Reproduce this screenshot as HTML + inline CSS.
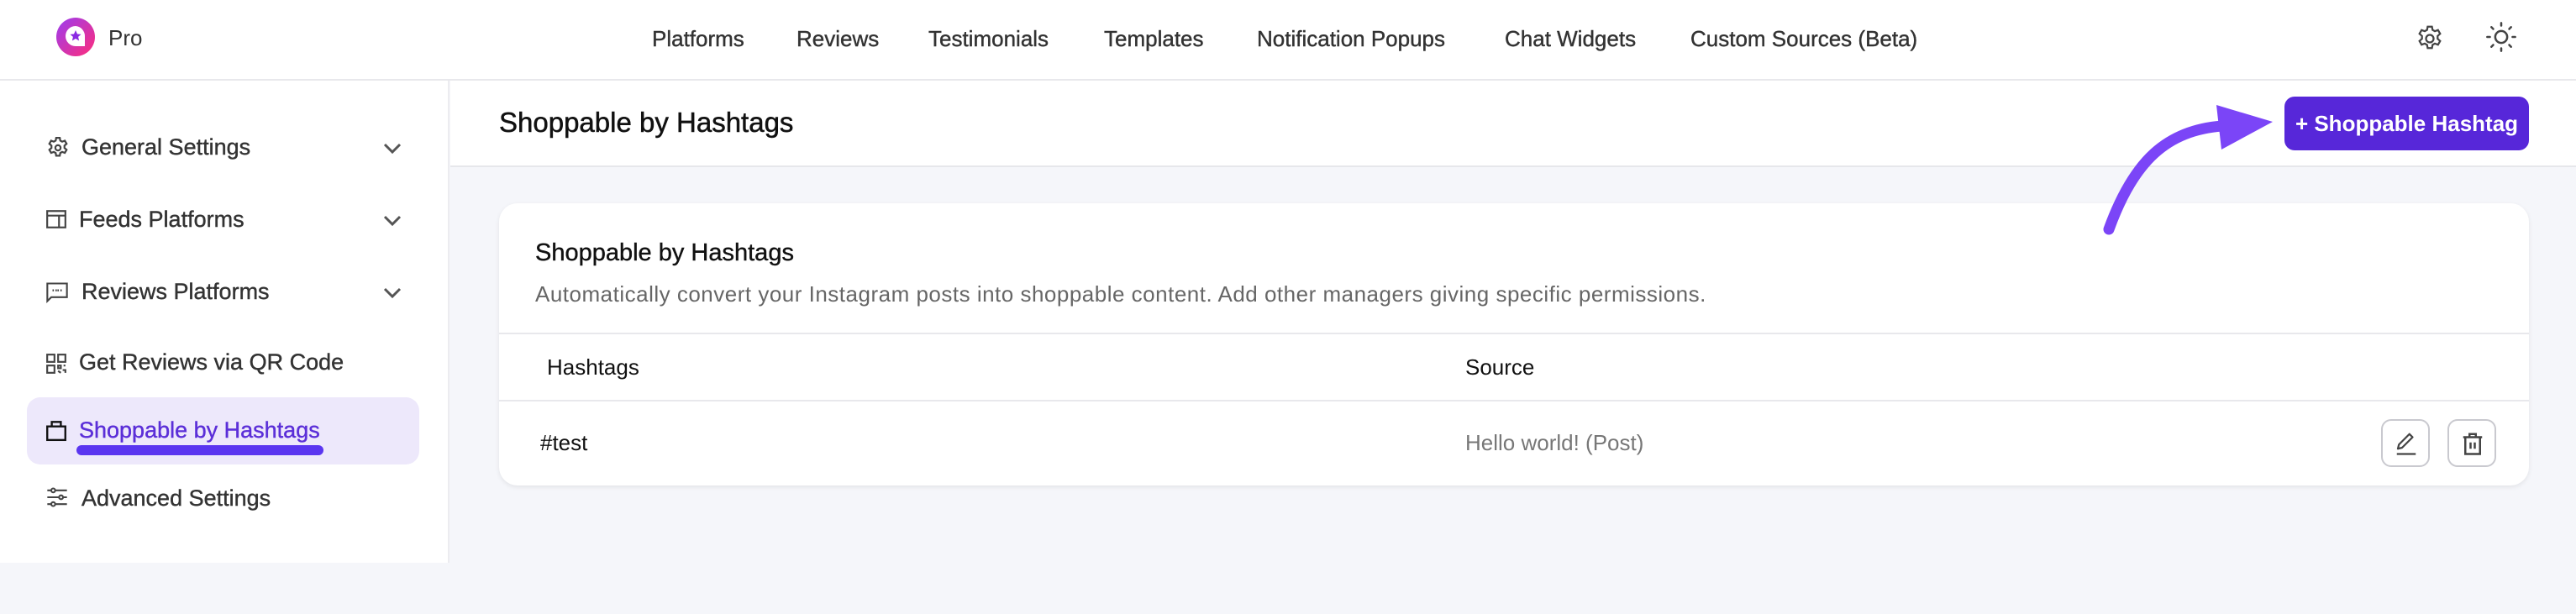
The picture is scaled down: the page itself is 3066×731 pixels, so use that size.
<!DOCTYPE html>
<html><head><meta charset="utf-8"><style>
*{margin:0;padding:0;box-sizing:border-box}
body{width:3066px;height:731px;overflow:hidden;background:#f5f6fa;font-family:"Liberation Sans",sans-serif;position:relative;color:#111}
.abs{position:absolute;white-space:nowrap}
.hdr{position:absolute;left:0;top:0;width:3066px;height:96px;background:#fff;border-bottom:2px solid #e8e8ec}
.nav{font-size:26px;color:#333;top:31px;-webkit-text-stroke:0.4px #333}
.side{position:absolute;left:0;top:96px;width:535px;height:574px;background:#fff;border-right:2px solid #ececf0}
.si{font-size:27px;color:#333;-webkit-text-stroke:0.4px #333}
.tb{position:absolute;left:536px;top:96px;width:2530px;height:103px;background:#fff;border-bottom:2px solid #e6e7eb}
.card{position:absolute;left:594px;top:242px;width:2416px;height:336px;background:#fff;border-radius:22px;box-shadow:0 2px 6px rgba(0,0,0,.08)}
.ib{position:absolute;width:58px;height:57px;border:2px solid #c9c9cf;border-radius:12px;top:499px;background:#fff}
</style></head><body>
<div class="hdr"></div>
<svg class="abs" style="left:66px;top:20px" width="48" height="48" viewBox="0 0 48 48"><defs><linearGradient id="g" x1="0" y1="0" x2="1" y2="1"><stop offset="0" stop-color="#9b3df0"/><stop offset="1" stop-color="#ff2d7a"/></linearGradient></defs><circle cx="24" cy="24" r="23" fill="url(#g)"/><path d="M24 11a12 12 0 1 0 0 24h11V23A12 12 0 0 0 24 11z" fill="#fff"/><path d="M24 16l2 4.5 4.5.4-3.4 3 1 4.6L24 26l-4.1 2.5 1-4.6-3.4-3 4.5-.4z" fill="#8a2be2"/></svg>
<div class="abs" style="left:129px;top:30px;font-size:26px;color:#333">Pro</div>
<div class="abs nav" style="left:776px">Platforms</div>
<div class="abs nav" style="left:948px">Reviews</div>
<div class="abs nav" style="left:1105px">Testimonials</div>
<div class="abs nav" style="left:1314px">Templates</div>
<div class="abs nav" style="left:1496px">Notification Popups</div>
<div class="abs nav" style="left:1791px">Chat Widgets</div>
<div class="abs nav" style="left:2012px">Custom Sources (Beta)</div>
<svg class="abs" style="left:2874px;top:28px" width="36" height="36" viewBox="0 0 24 24" fill="none" stroke="#444" stroke-width="1.5"><path d="M10.3 2.5h3.4l.5 2.6 1.8 1 2.5-.9 1.7 2.9-2 1.8v2.2l2 1.8-1.7 2.9-2.5-.9-1.8 1-.5 2.6h-3.4l-.5-2.6-1.8-1-2.5.9-1.7-2.9 2-1.8v-2.2l-2-1.8 1.7-2.9 2.5.9 1.8-1z"/><circle cx="12" cy="12" r="3"/></svg>
<svg class="abs" style="left:2958px;top:25px" width="38" height="38" viewBox="0 0 24 24" fill="none" stroke="#444" stroke-width="1.6" stroke-linecap="round"><circle cx="12" cy="12" r="4.5"/><path d="M12 1.5v2M12 20.5v2M1.5 12h2M20.5 12h2M4.6 4.6l1.4 1.4M18 18l1.4 1.4M4.6 19.4L6 18M18 6l1.4-1.4"/></svg>

<div class="side"></div>
<div class="abs" style="left:32px;top:473px;width:467px;height:80px;background:#ede8fb;border-radius:16px"></div>
<svg class="abs" style="left:54px;top:161px" width="30" height="30" viewBox="0 0 24 24" fill="none" stroke="#444" stroke-width="1.8"><path d="M10.3 2.5h3.4l.5 2.6 1.8 1 2.5-.9 1.7 2.9-2 1.8v2.2l2 1.8-1.7 2.9-2.5-.9-1.8 1-.5 2.6h-3.4l-.5-2.6-1.8-1-2.5.9-1.7-2.9 2-1.8v-2.2l-2-1.8 1.7-2.9 2.5.9 1.8-1z"/><circle cx="12" cy="12" r="2.5"/></svg>
<div class="abs si" style="left:97px;top:160px">General Settings</div>
<svg class="abs" style="left:54px;top:248px" width="26" height="26" viewBox="0 0 24 24" fill="none" stroke="#444" stroke-width="2"><rect x="2" y="3" width="20" height="18"/><path d="M2 8h20M15 8v13"/></svg>
<div class="abs si" style="left:94px;top:246px">Feeds Platforms</div>
<svg class="abs" style="left:54px;top:335px" width="28" height="26" viewBox="0 0 24 22" fill="none" stroke="#444" stroke-width="1.8"><path d="M2 2h20v14H6l-4 4z"/><path d="M8 8v2M11 8v2M13 8v2M16 8v2" stroke-width="1.4"/></svg>
<div class="abs si" style="left:97px;top:332px">Reviews Platforms</div>
<svg class="abs" style="left:54px;top:420px" width="26" height="26" viewBox="0 0 24 24" fill="none" stroke="#444" stroke-width="2"><rect x="2" y="2" width="8" height="8"/><rect x="14" y="2" width="8" height="8"/><rect x="2" y="14" width="8" height="8"/><path d="M14 14h3v3h-3zM19 19h3v3M14 20l3 2M20 14h2"/></svg>
<div class="abs si" style="left:94px;top:416px">Get Reviews via QR Code</div>
<svg class="abs" style="left:54px;top:498px" width="26" height="28" viewBox="0 0 24 26" fill="none" stroke="#111" stroke-width="2.2"><rect x="2" y="9" width="20" height="15"/><path d="M7 9V4h10v5"/></svg>
<div class="abs si" style="left:94px;top:497px;color:#5b2fd8;-webkit-text-stroke:0.4px #5b2fd8">Shoppable by Hashtags</div>
<div class="abs" style="left:91px;top:530px;width:294px;height:12px;background:#5a35f0;border-radius:6px"></div>
<svg class="abs" style="left:54px;top:578px" width="28" height="28" viewBox="0 0 24 24" fill="none" stroke="#444" stroke-width="1.8"><path d="M2 5h20M2 12h20M2 19h20"/><circle cx="8" cy="5" r="2" fill="#fff"/><circle cx="16" cy="12" r="2" fill="#fff"/><circle cx="8" cy="19" r="2" fill="#fff"/></svg>
<div class="abs si" style="left:97px;top:578px">Advanced Settings</div>
<svg class="abs" style="left:456px;top:170px" width="22" height="14" viewBox="0 0 22 14" fill="none" stroke="#555" stroke-width="3"><path d="M2 2l9 9 9-9"/></svg>
<svg class="abs" style="left:456px;top:256px" width="22" height="14" viewBox="0 0 22 14" fill="none" stroke="#555" stroke-width="3"><path d="M2 2l9 9 9-9"/></svg>
<svg class="abs" style="left:456px;top:342px" width="22" height="14" viewBox="0 0 22 14" fill="none" stroke="#555" stroke-width="3"><path d="M2 2l9 9 9-9"/></svg>

<div class="tb"></div>
<div class="abs" style="left:594px;top:127px;font-size:33px;color:#111;-webkit-text-stroke:0.5px #111">Shoppable by Hashtags</div>
<div class="abs" style="left:2719px;top:115px;width:291px;height:64px;background:#5727d9;border-radius:12px;color:#fff;font-size:26px;font-weight:bold;line-height:64px;text-align:center">+ Shoppable Hashtag</div>

<div class="card"></div>
<div class="abs" style="left:637px;top:285px;font-size:29px;color:#111;-webkit-text-stroke:0.4px #111">Shoppable by Hashtags</div>
<div class="abs" style="left:637px;top:335px;font-size:26px;color:#666;letter-spacing:0.5px">Automatically convert your Instagram posts into shoppable content. Add other managers giving specific permissions.</div>
<div class="abs" style="left:594px;top:396px;width:2416px;height:2px;background:#e8e8ec"></div>
<div class="abs" style="left:651px;top:422px;font-size:26px;color:#111">Hashtags</div>
<div class="abs" style="left:1744px;top:422px;font-size:26px;color:#111">Source</div>
<div class="abs" style="left:594px;top:476px;width:2416px;height:2px;background:#e8e8ec"></div>
<div class="abs" style="left:643px;top:512px;font-size:26px;color:#111">#test</div>
<div class="abs" style="left:1744px;top:512px;font-size:26px;color:#777">Hello world! (Post)</div>
<div class="ib" style="left:2834px"><svg style="position:absolute;left:13px;top:12px" width="30" height="30" viewBox="0 0 24 24" fill="none" stroke="#444" stroke-width="1.8" stroke-linejoin="round"><path d="M4 17l1-4L15 3l3 3L8 16z"/><path d="M3 22h18"/></svg></div>
<div class="ib" style="left:2913px"><svg style="position:absolute;left:13px;top:12px" width="30" height="30" viewBox="0 0 24 24" fill="none" stroke="#444" stroke-width="2"><path d="M3 6h18M9 6V3h6v3M5 6v16h14V6M10 11v6M14 11v6"/></svg></div>
<svg class="abs" style="left:0;top:0" width="3066" height="731" viewBox="0 0 3066 731"><path d="M2510 273C2540 190 2580 155 2645 150" fill="none" stroke="#7b45f7" stroke-width="13" stroke-linecap="round"/><path d="M2638 125L2705 145L2644 178Z" fill="#7b45f7"/></svg>
</body></html>
